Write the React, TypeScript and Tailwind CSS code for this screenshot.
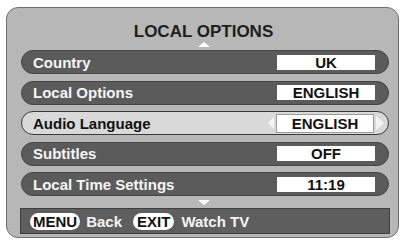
const rows = [
  { label: "Country", value: "UK" },
  { label: "Local Options", value: "ENGLISH" },
  { label: "Audio Language", value: "ENGLISH", active: true },
  { label: "Subtitles", value: "OFF" },
  { label: "Local Time Settings", value: "11:19" },
];

function Row({ label, value, active }: { label: string; value: string; active?: boolean }) {
  if (active) {
    return (
      <div className="h-[24px] w-full rounded-full border border-[#3a3a3a] bg-[#d9d9d9] flex items-center pl-[11px]">
        <span className="flex-1 text-[15px] font-bold text-[#111] leading-none">{label}</span>
        <svg width="6" height="12" viewBox="0 0 6 12" className="mr-[2px]">
          <polygon points="6,0 6,12 0,6" fill="#f4f4f4" />
        </svg>
        <div className="w-[98px] h-[19px] bg-white border border-[#9a9a9a] flex items-center justify-center text-[15px] font-bold text-[#111] leading-none">
          {value}
        </div>
        <svg width="8" height="14" viewBox="0 0 8 14" className="ml-[2px] mr-[4px]">
          <polygon points="0,0 0,14 8,7" fill="#f4f4f4" />
        </svg>
      </div>
    );
  }
  return (
    <div className="h-[24px] w-full rounded-full border border-[#454545] bg-[#5b5b5b] flex items-center pl-[11px] pr-[13px]">
      <span className="flex-1 text-[15px] font-bold text-[#f5f5f5] leading-none">{label}</span>
      <div className="w-[98px] h-[15px] bg-white flex items-center justify-center text-[15px] font-bold text-[#111] leading-none">
        {value}
      </div>
    </div>
  );
}

export default function App() {
  return (
    <div
      className="w-[403px] h-[240px] bg-white pt-[7px] pl-[6px]"
      style={{ fontFamily: '"Liberation Sans", Arial, sans-serif' }}
    >
      <div className="w-[393px] h-[231px] rounded-[12px] border border-[#707070] bg-[#b7b7b7] flex flex-col">
        <div className="mt-[13px] h-[20px] flex items-center justify-center text-[17px] font-bold text-[#1e1e1e] leading-none pl-[2px]">
          LOCAL OPTIONS
        </div>
        <div className="h-[6px] flex justify-center pl-[2px] mt-[1px]">
          <svg width="12" height="5" viewBox="0 0 12 5">
            <polygon points="0,5 12,5 6,0" fill="#ffffff" />
          </svg>
        </div>
        <div className="ml-[14px] mt-[2px] w-[368px] flex flex-col gap-[6.5px]">
          {rows.map((r) => (
            <Row key={r.label} {...r} />
          ))}
        </div>
        <div className="h-[12px] flex items-center justify-center pl-[2px]">
          <svg width="12" height="5" viewBox="0 0 12 5">
            <polygon points="0,0 12,0 6,5" fill="#ffffff" />
          </svg>
        </div>
        <div className="ml-[13px] w-[370px] h-[26px] bg-[#5e5e5e] border border-[#3e3e3e] flex items-center pl-[9px] text-[15px] font-bold leading-none">
          <span className="h-[17px] px-[3px] rounded-full bg-white text-[#111] flex items-center">MENU</span>
          <span className="ml-[6px] text-[#f5f5f5]">Back</span>
          <span className="ml-[11px] h-[17px] px-[4px] rounded-full bg-white text-[#111] flex items-center">EXIT</span>
          <span className="ml-[7px] text-[#f5f5f5]">Watch TV</span>
        </div>
      </div>
    </div>
  );
}
